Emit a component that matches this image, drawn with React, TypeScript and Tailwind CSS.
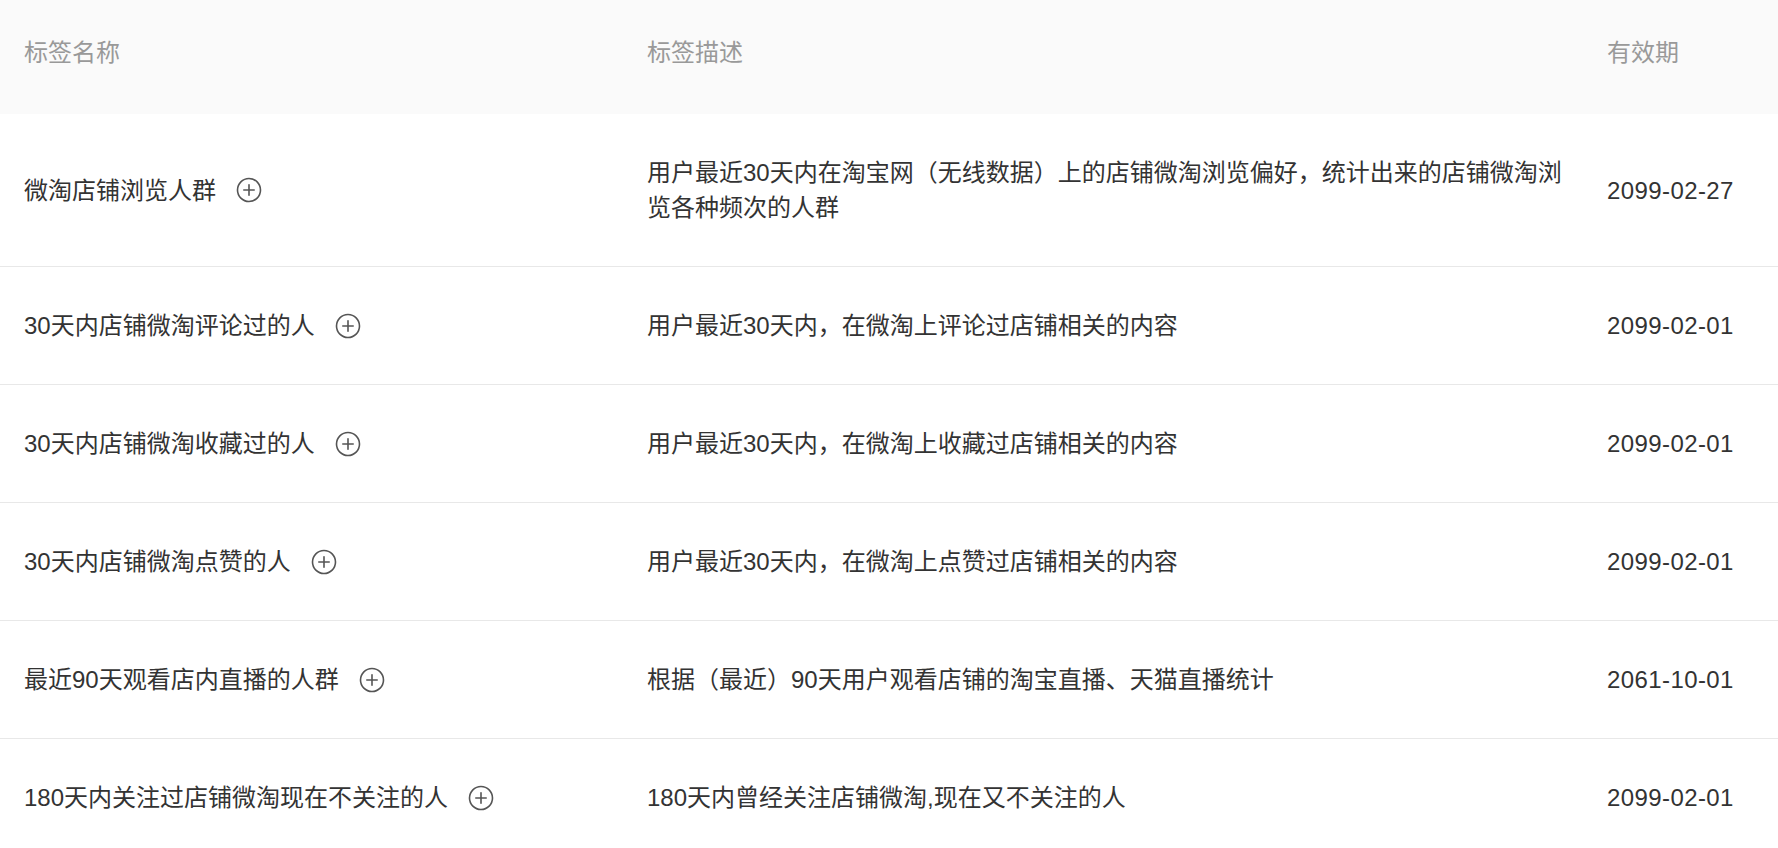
const rows = [
  {
    name: "微淘店铺浏览人群",
    desc: "用户最近30天内在淘宝网（无线数据）上的店铺微淘浏览偏好，统计出来的店铺微淘浏览各种频次的人群",
    date: "2099-02-27",
  },
  { name: "30天内店铺微淘评论过的人", desc: "用户最近30天内，在微淘上评论过店铺相关的内容", date: "2099-02-01" },
  { name: "30天内店铺微淘收藏过的人", desc: "用户最近30天内，在微淘上收藏过店铺相关的内容", date: "2099-02-01" },
  { name: "30天内店铺微淘点赞的人", desc: "用户最近30天内，在微淘上点赞过店铺相关的内容", date: "2099-02-01" },
  { name: "最近90天观看店内直播的人群", desc: "根据（最近）90天用户观看店铺的淘宝直播、天猫直播统计", date: "2061-10-01" },
  { name: "180天内关注过店铺微淘现在不关注的人", desc: "180天内曾经关注店铺微淘,现在又不关注的人", date: "2099-02-01" },
];

function PlusCircle() {
  return (
    <svg width="26" height="26" viewBox="0 0 26 26" fill="none" stroke="#555" strokeWidth="1.6" strokeLinecap="round">
      <circle cx="13" cy="13" r="11.5" />
      <path d="M13 7.8v10.4M7.8 13h10.4" />
    </svg>
  );
}

export default function App() {
  return (
    <div
      className="w-[1778px] bg-white text-[24px] leading-[35px]"
      style={{ fontFamily: '"Liberation Sans", "Noto Sans CJK SC", sans-serif' }}
    >
      {/* HEADER */}
      <div className="grid grid-cols-[623px_960px_1fr] bg-[#fafafa] text-[#999] h-[114px]">
        <div className="pl-6 pt-[35px]">标签名称</div>
        <div className="pl-6 pt-[35px]">标签描述</div>
        <div className="pl-6 pt-[35px]">有效期</div>
      </div>

      {/* ROWS */}
      {rows.map((r) => (
        <div
          key={r.name}
          className="grid grid-cols-[623px_960px_1fr] items-center border-b border-[#e8e8e8] text-[#333] py-[41px]"
        >
          <div className="pl-6 flex items-center gap-[20px]">
            <span>{r.name}</span>
            <PlusCircle />
          </div>
          <div className="pl-6 pr-2">{r.desc}</div>
          <div className="pl-6 tracking-[0.4px]">{r.date}</div>
        </div>
      ))}
    </div>
  );
}
